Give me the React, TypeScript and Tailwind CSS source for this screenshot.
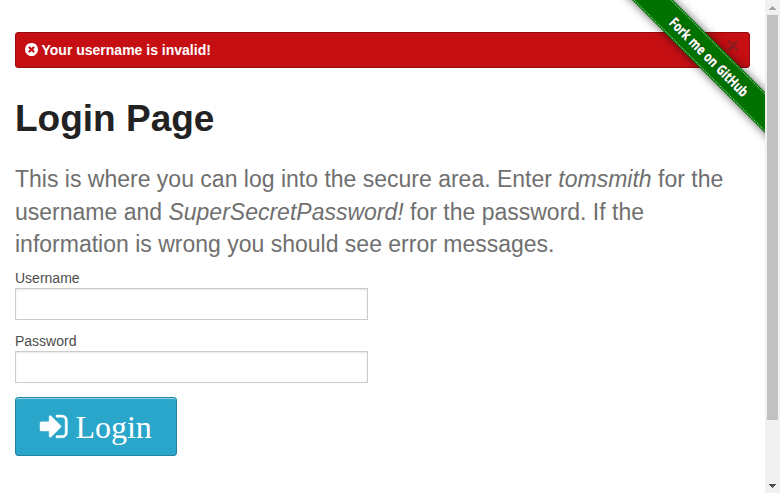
import React from "react";

function Scrollbar() {
  return (
    <div className="flex h-full w-[15px] shrink-0 flex-col items-center bg-[#f1f1f1]">
      <div className="flex h-[15px] items-center">
        <svg width="7" height="4" viewBox="0 0 7 4" shapeRendering="crispEdges" className="mt-px block">
          <path d="M3 0h1v1h1v1h1v1h1v1H0V3h1V2h1V1h1z" fill="#a3a3a3" />
        </svg>
      </div>
      <div className="h-[405px] w-[11px] bg-[#c1c1c1]" />
      <div className="mt-auto flex h-[15px] items-center">
        <svg width="7" height="4" viewBox="0 0 7 4" shapeRendering="crispEdges" className="block">
          <path d="M0 0h7v1H6v1H5v1H4v1H3V3H2V2H1V1H0z" fill="#505050" />
        </svg>
      </div>
    </div>
  );
}

function Ribbon() {
  return (
    <div className="pointer-events-none absolute top-0 right-0 h-[149px] w-[149px] overflow-hidden">
      <div className="absolute top-[42px] left-[-19px] flex h-[29px] w-[224px] rotate-45 items-center justify-center bg-[#007200] shadow-[0_0_10px_rgba(0,0,0,0.6)]">
        <div className="absolute inset-x-0 top-px border-t border-dotted border-[#a5d0a5]" />
        <div className="absolute inset-x-0 bottom-px border-t border-dotted border-[#a5d0a5]" />
        <span className="scale-x-[0.78] font-['Open_Sans',sans-serif] text-[14px] font-bold whitespace-nowrap text-white [word-spacing:1px] [-webkit-text-stroke:0.3px_white] [text-shadow:0_0_3px_rgba(0,0,0,0.6)]">
          Fork me on GitHub
        </span>
      </div>
    </div>
  );
}

function Field({ label, type }: { label: string; type: string }) {
  return (
    <label className="mb-[10px] block w-[353px] text-[14px] leading-[21px] text-[#4d4d4d]">
      <span className="block h-[21px] pt-px">{label}</span>
      <input
        type={type}
        className="block h-[32px] w-full border border-[#cccccc] bg-white p-2 shadow-[inset_0_1px_2px_rgba(0,0,0,0.1)] outline-none"
      />
    </label>
  );
}

export default function App() {
  return (
    <div className="flex h-[493px] w-[780px] overflow-hidden bg-white font-['Liberation_Sans',Arial,sans-serif]">
      <main className="relative h-full w-[765px] px-[15px] pt-[32px]">
        <div className="flex h-[36px] items-center rounded-[3px] border border-[#970b0e] bg-[#c60f13] pr-[10px] pl-[9px] text-[14px] font-bold text-white">
          <svg width="13" height="13" viewBox="0 128 1536 1536" className="mr-[3.5px] mb-px" fill="currentColor">
            <path d="M1149 1122q0-26-19-45l-181-181 181-181q19-19 19-45 0-27-19-46l-90-90q-19-19-46-19-26 0-45 19l-181 181-181-181q-19-19-45-19-27 0-46 19l-90 90q-19 19-19 46 0 26 19 45l181 181-181 181q-19 19-19 45 0 27 19 46l90 90q19 19 46 19 26 0 45-19l181-181 181 181q19 19 45 19 27 0 46-19l90-90q19-19 19-46zm387-226q0 209-103 385.5t-279.5 279.5-385.5 103-385.5-103-279.5-279.5-103-385.5 103-385.5 279.5-279.5 385.5-103 385.5 103 279.5 279.5 103 385.5z" />
          </svg>
          <span>Your username is invalid!</span>
          <span className="ml-auto pb-[9px] text-[22px] leading-none font-bold text-[#333333]/40">×</span>
        </div>
        <h2 className="mt-[25px] text-[37px] leading-[52px] font-bold text-[#222222]">Login Page</h2>
        <h4 className="mt-[18.4px] text-[23px] leading-[32.4px] text-[#6f6f6f]">
          This is where you can log into the secure area. Enter <em>tomsmith</em> for the username and{" "}
          <em>SuperSecretPassword!</em> for the password. If the information is wrong you should see error messages.
        </h4>
        <form className="mt-[6.4px]">
          <Field label="Username" type="text" />
          <Field label="Password" type="password" />
          <button
            type="button"
            className="mt-[14px] flex h-[59px] w-[162px] items-center rounded-[3px] border border-[#2284a1] bg-[#2ba6cb] pt-px pl-[24px] font-['Liberation_Serif',serif] text-[32px] leading-none text-white shadow-[inset_0_1px_0_rgba(255,255,255,0.5)]"
          >
            <svg
              width="27.43"
              height="22.86"
              viewBox="0 256 1536 1280"
              className="mr-[8px] mb-px overflow-visible"
              fill="currentColor"
              stroke="currentColor"
              strokeWidth="24"
            >
              <path d="M1184 896q0 26-19 45l-544 544q-19 19-45 19t-45-19-19-45v-288h-448q-26 0-45-19t-19-45v-384q0-26 19-45t45-19h448v-288q0-26 19-45t45-19 45 19l544 544q19 19 19 45zm352-352v704q0 119-84.5 203.5t-203.5 84.5h-320q-13 0-22.5-9.5t-9.5-22.5q0-4-1-20t-.5-26.5 3-23.5 10-19.5 20.5-6.5h320q66 0 113-47t47-113v-704q0-66-47-113t-113-47h-312l-11.5-1-11.5-3-8-5.5-7-9-2-13.5q0-4-1-20t-.5-26.5 3-23.5 10-19.5 20.5-6.5h320q119 0 203.5 84.5t84.5 203.5z" />
            </svg>
            <span>Login</span>
          </button>
        </form>
        <Ribbon />
      </main>
      <Scrollbar />
    </div>
  );
}
